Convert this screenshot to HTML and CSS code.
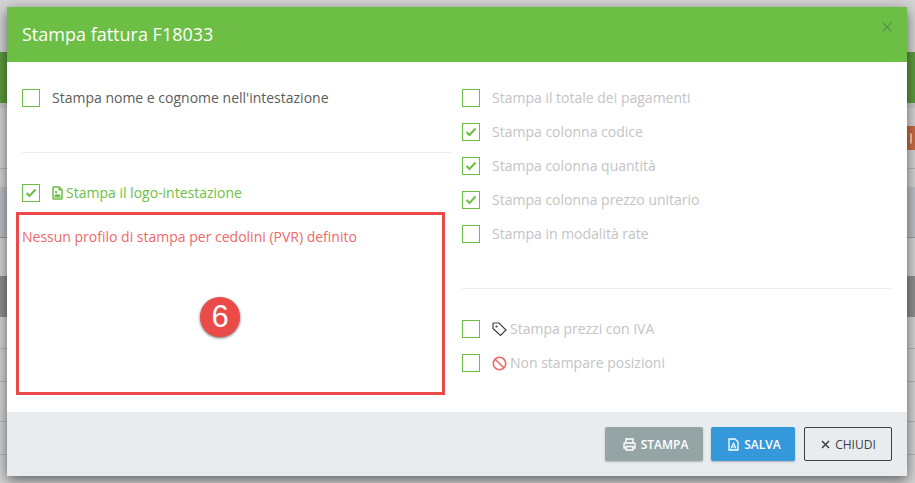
FILE: index.html
```html
<!DOCTYPE html>
<html lang="it">
<head>
    <meta charset="utf-8">
    <title>Stampa fattura F18033</title>
    <link rel="stylesheet" href="styles.css">
</head>
<body>
    <div class="backdrop">
        <div class="bg-band bg-top"></div>
        <div class="bg-band bg-green"></div>
        <div class="bg-band bg-strip"></div>
        <div class="bg-band bg-row1"><span class="bg-badge"></span></div>
        <div class="bg-band bg-row2"></div>
        <div class="bg-band bg-blue"></div>
        <div class="bg-band bg-row3"></div>
        <div class="bg-band bg-dark"></div>
        <div class="bg-band bg-row4"></div>
        <div class="bg-band bg-row5"></div>
        <div class="bg-band bg-row6"></div>
        <div class="bg-band bg-row5"></div>
    </div>

    <div class="modal">
        <div class="modal-header">
            <h4>Stampa fattura F18033</h4>
            <span class="close">
                <svg width="10" height="10" viewBox="0 0 10 10"><path d="M0.500 0.500l9 9M9.500 0.500l-9 9" stroke="#55984a" stroke-width="1.300" fill="none"/></svg>
            </span>
        </div>
        <div class="modal-body">
            <div class="col col-left">
                <label class="check check-dark"><span class="box"></span>Stampa nome e cognome nell'intestazione</label>
                <hr class="sep">
                <label class="check check-green"><span class="box on"><svg class="tick" width="12" height="10" viewBox="0 0 12 10"><path d="M1.500 5l3 3 6-6.500" stroke="#6dbe45" stroke-width="2" fill="none"/></svg></span>
                    <svg class="ico" width="11" height="14" viewBox="0 0 11 14"><path d="M1.500 1h5.500l3 3v8.500a.5.500 0 0 1-.5.500h-8a.5.500 0 0 1-.5-.5v-11a.5.500 0 0 1 .5-.5z" fill="none" stroke="#6dbe45" stroke-width="1.500"/><path d="M2.500 11.500V9.500l2-2 1.500 1.500 1-1 1.500 1.500v2zM3 5h2v2H3zM6.500 1.500h1l2 2v1h-3z" fill="#6dbe45"/></svg>Stampa il logo-intestazione</label>
                <div class="notice">
                    <p>Nessun profilo di stampa per cedolini (PVR) definito</p>
                    <span class="step">6</span>
                </div>
            </div>
            <div class="col col-right">
                <label class="check"><span class="box"></span>Stampa il totale dei pagamenti</label>
                <label class="check"><span class="box on"><svg class="tick" width="12" height="10" viewBox="0 0 12 10"><path d="M1.500 5l3 3 6-6.500" stroke="#6dbe45" stroke-width="2" fill="none"/></svg></span>Stampa colonna codice</label>
                <label class="check"><span class="box on"><svg class="tick" width="12" height="10" viewBox="0 0 12 10"><path d="M1.500 5l3 3 6-6.500" stroke="#6dbe45" stroke-width="2" fill="none"/></svg></span>Stampa colonna quantità</label>
                <label class="check"><span class="box on"><svg class="tick" width="12" height="10" viewBox="0 0 12 10"><path d="M1.500 5l3 3 6-6.500" stroke="#6dbe45" stroke-width="2" fill="none"/></svg></span>Stampa colonna prezzo unitario</label>
                <label class="check"><span class="box"></span>Stampa in modalità rate</label>
                <hr class="sep">
                <label class="check"><span class="box"></span>
                    <svg class="ico" width="15" height="15" viewBox="0 0 15 15"><path d="M1 1.500a.5.500 0 0 1 .5-.5H7l7 7-5.500 5.500-7.500-7z" fill="none" stroke="#3a3f44" stroke-width="1.200"/><circle cx="4.500" cy="4.500" r="1.100" fill="#3a3f44"/></svg>Stampa prezzi con IVA</label>
                <label class="check"><span class="box"></span>
                    <svg class="ico" width="15" height="15" viewBox="0 0 15 15"><circle cx="7.500" cy="7.500" r="6.200" fill="none" stroke="#ec6a6a" stroke-width="1.600"/><path d="M3.200 3.200l8.600 8.600" stroke="#ec6a6a" stroke-width="1.600"/></svg>Non stampare posizioni</label>
            </div>
        </div>
        <div class="modal-footer">
            <button class="btn btn-grey">
                <svg width="13" height="13" viewBox="0 0 13 13"><path d="M3 5V1h7v4M3 10H1V6a1 1 0 0 1 1-1h9a1 1 0 0 1 1 1v4h-2M3 8.500h7V12H3z" fill="none" stroke="#fff" stroke-width="1.400"/></svg>STAMPA</button>
            <button class="btn btn-blue">
                <svg width="11" height="13" viewBox="0 0 11 13"><path d="M1 1h6l3 3v8H1z" fill="none" stroke="#fff" stroke-width="1.300"/><path d="M3 10.500L5.500 5 8 10.500M4 9h3" fill="none" stroke="#fff" stroke-width="1.100"/></svg>SALVA</button>
            <button class="btn btn-line">
                <svg width="9" height="9" viewBox="0 0 9 9"><path d="M1 1l7 7M8 1L1 8" stroke="#3a3f44" stroke-width="1.500" fill="none"/></svg>CHIUDI</button>
        </div>
    </div>
</body>
</html>
```

FILE: styles.css
```css
* {
    box-sizing: border-box;
}

html, body {
    margin: 0;
    height: 100%;
    overflow: hidden;
}

body {
    position: relative;
    font-family: "Open Sans", "Noto Sans", sans-serif;
    font-size: 14px;
    background: #d3d3d3;
}

.backdrop {
    display: flex;
    flex-direction: column;
    height: 100%;
}

.bg-band {
    flex: none;
    background: #d3d3d3;
    border-bottom: 1px solid #b4b6b8;
}

.bg-top {
    height: 52px;
    border: 0;
}

.bg-green {
    height: 51px;
    background: #5c9a3e;
    border: 0;
}

.bg-strip {
    height: 5px;
    background: #c6c6c6;
    border: 0;
}

.bg-row1 {
    display: flex;
    justify-content: flex-end;
    height: 61px;
    padding-top: 18px;
}

.bg-badge {
    display: flex;
    align-items: center;
    width: 8px;
    height: 24px;
    background: #c96a42;
}

.bg-badge::before {
    content: "";
    width: 3px;
    height: 11px;
    border-right: 2px solid #e9cdb8;
    border-radius: 0 2px 2px 0;
}

.bg-row2 {
    height: 18px;
    border: 0;
}

.bg-blue {
    height: 51px;
    background: #bcc1c6;
    border-bottom: 1px solid #9a9c9e;
}

.bg-row3 {
    height: 38px;
    border: 0;
}

.bg-dark {
    height: 41px;
    background: #8e8e8e;
    border: 0;
}

.bg-row4 {
    height: 32px;
}

.bg-row5 {
    height: 33px;
}

.bg-row6 {
    height: 40px;
}

.modal {
    position: absolute;
    left: 7px;
    top: 7px;
    display: flex;
    flex-direction: column;
    width: 900px;
    height: 469px;
    background: #fff;
    box-shadow: 0 4px 12px rgba(0, 0, 0, 0.55);
}

.modal-header {
    display: flex;
    justify-content: space-between;
    height: 55px;
    padding: 0 15px;
    background: #6dbe45;
}

.modal-header h4 {
    margin: 0;
    color: #fff;
    font-size: 18px;
    font-weight: 400;
    line-height: 55px;
}

.close {
    padding-top: 15px;
}

.close svg {
    display: block;
}

.modal-body {
    display: flex;
    flex: 1;
    padding: 27px 15px 0;
}

.col-left {
    width: 440px;
    padding-right: 10px;
}

.col-right {
    flex: 1;
}

.check {
    display: flex;
    align-items: flex-start;
    height: 18px;
    margin-bottom: 16px;
    color: #c4c4c4;
    font-size: 14px;
    line-height: 18px;
}

.check-dark {
    color: #5c5c5c;
}

.check-green {
    color: #6dbe45;
}

.box {
    display: flex;
    align-items: center;
    justify-content: center;
    flex: none;
    width: 18px;
    height: 18px;
    margin-right: 12px;
    border: 1px solid #6dbe45;
}

.ico {
    flex: none;
    align-self: center;
    margin-right: 3px;
}

.sep {
    margin: 45px 0 31px;
    border: 0;
    border-top: 1px solid #eceeef;
}

.notice {
    position: relative;
    width: 429px;
    height: 183px;
    margin: -6px 0 0 -6px;
    padding: 13px 0 0 3px;
    border: 3px solid #ea4a48;
}

.notice p {
    margin: 0;
    color: #ec6a6a;
    font-size: 14px;
    line-height: 18px;
}

.step {
    position: absolute;
    left: 181px;
    top: 82px;
    width: 40px;
    height: 40px;
    border-radius: 50%;
    background: #ea4a48;
    box-shadow: 0 1px 3px rgba(0, 0, 0, 0.6);
    color: #fff;
    font-family: "Liberation Sans", sans-serif;
    font-size: 31px;
    line-height: 40px;
    text-align: center;
}

.modal-footer {
    display: flex;
    justify-content: flex-end;
    gap: 8px;
    height: 64px;
    padding: 15px 15px 0 0;
    background: #e9ecef;
}

.btn {
    display: flex;
    align-items: center;
    justify-content: center;
    gap: 5px;
    height: 34px;
    padding: 0;
    border: 0;
    border-radius: 2px;
    font-family: "Open Sans", "Noto Sans", sans-serif;
    font-size: 12px;
    font-weight: 600;
}

.btn-grey {
    width: 98px;
    padding-left: 3px;
    background: #95a5a6;
    color: #fff;
    box-shadow: 0 1px 2px rgba(0, 0, 0, 0.25);
}

.btn-blue {
    width: 84px;
    padding-left: 3px;
    background: #3498db;
    color: #fff;
    box-shadow: 0 1px 2px rgba(0, 0, 0, 0.25);
}

.btn-line {
    width: 88px;
    margin-left: 1px;
    padding-left: 1px;
    background: transparent;
    border: 1px solid #3a3f44;
    color: #3a3f44;
    font-weight: 400;
}
```
